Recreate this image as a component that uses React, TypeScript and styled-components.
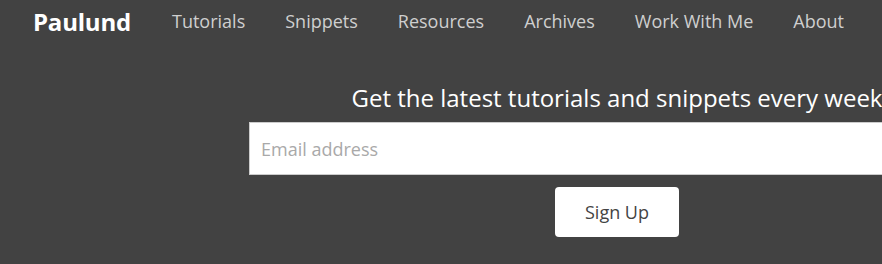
import React from "react";
import styled, { createGlobalStyle } from "styled-components";

const BACKGROUND = "#424242";
const NAV_TEXT = "#cfcfcf";

const GlobalStyle = createGlobalStyle`
  html, body {
    margin: 0;
    padding: 0;
    background: ${BACKGROUND};
    overflow: hidden;
  }
  body {
    font-family: "Open Sans", "Liberation Sans", sans-serif;
  }
`;

const Page = styled.div`
  width: 882px;
  height: 264px;
  overflow: hidden;
  background: ${BACKGROUND};
`;

const Header = styled.header`
  display: flex;
  align-items: center;
  height: 42px;
  padding-left: 33px;
`;

const Logo = styled.a`
  font-size: 24px;
  font-weight: 700;
  color: #ffffff;
  text-decoration: none;
  margin-right: 21px;
  letter-spacing: -0.2px;
`;

const NavList = styled.nav`
  display: flex;
  align-items: center;
`;

const NavLink = styled.a`
  padding: 0 20px;
  font-size: 18px;
  color: ${NAV_TEXT};
  text-decoration: none;
  white-space: nowrap;
`;

const Signup = styled.section`
  width: 736px;
  margin-left: 249px;
  padding-top: 40px;
  display: flex;
  flex-direction: column;
  align-items: center;
`;

const Heading = styled.h2`
  margin: 0 0 8px;
  font-size: 24px;
  font-weight: 400;
  color: #ffffff;
  white-space: nowrap;
  line-height: 32px;
`;

const EmailInput = styled.input`
  box-sizing: border-box;
  width: 100%;
  height: 53px;
  padding: 0 11px;
  border: 1px solid #cccccc;
  background: #ffffff;
  font-family: inherit;
  font-size: 18px;
  color: #444;
  outline: none;

  &::placeholder {
    color: #a9a9a9;
  }
`;

const SubmitButton = styled.button`
  margin-top: 12px;
  width: 124px;
  height: 50px;
  border: none;
  border-radius: 4px;
  background: #ffffff;
  color: #444444;
  font-family: inherit;
  font-size: 18px;
  cursor: pointer;
`;

const links = [
  "Tutorials",
  "Snippets",
  "Resources",
  "Archives",
  "Work With Me",
  "About",
];

const App = () => {
  return (
    <Page>
      <GlobalStyle />
      <Header>
        <Logo href="#">Paulund</Logo>
        <NavList>
          {links.map((l) => (
            <NavLink key={l} href="#">
              {l}
            </NavLink>
          ))}
        </NavList>
      </Header>
      <Signup>
        <Heading>Get the latest tutorials and snippets every week</Heading>
        <EmailInput type="email" placeholder="Email address" />
        <SubmitButton>Sign Up</SubmitButton>
      </Signup>
    </Page>
  );
};

export default App;
